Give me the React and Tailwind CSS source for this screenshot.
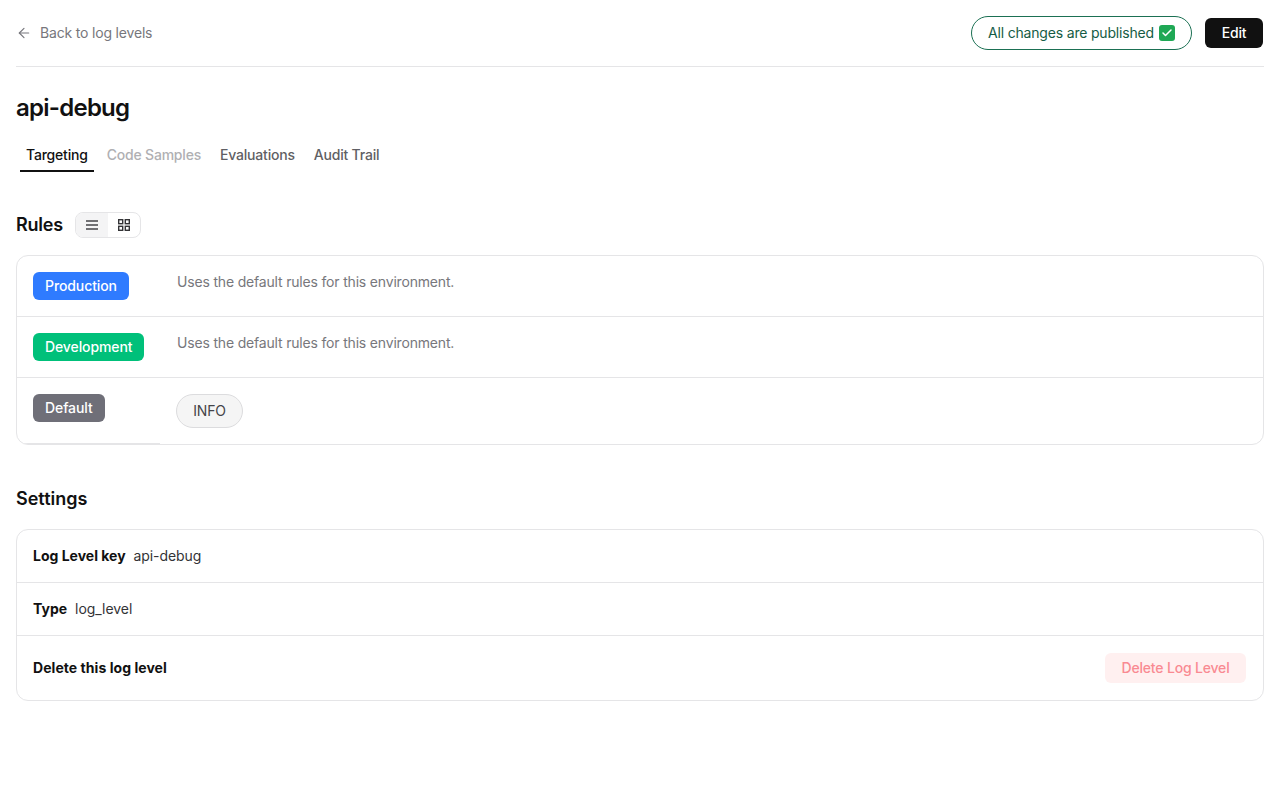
import React from "react";
import { ArrowLeft, Check } from "lucide-react";

const tabs = [
  { name: "Targeting", className: "text-[#111111] border-[#111111]" },
  { name: "Code Samples", className: "text-[#b0b0b3] border-transparent" },
  { name: "Evaluations", className: "text-[#5f5f64] border-transparent" },
  { name: "Audit Trail", className: "text-[#5f5f64] border-transparent" },
];

const App = () => {
  return (
    <div
      className="min-h-[800px] bg-white px-4 text-sm tracking-[-0.18px] text-[#111111]"
      style={{ fontFamily: "Inter, sans-serif" }}
    >
      {/* Header */}
      <div className="flex h-[67px] items-center justify-between border-b border-[#e5e5e7]">
        <div className="flex items-center gap-2 text-[#77777c]">
          <ArrowLeft size={16} strokeWidth={1.75} />
          <span>Back to log levels</span>
        </div>
        <div className="flex items-center gap-[13px] pr-px">
          <div className="flex h-[34px] w-[221px] items-center gap-[5px] rounded-full border border-[#1b7053] pl-4 text-[#155c45]">
            <span>All changes are published</span>
            <span className="flex h-4 w-4 items-center justify-center rounded-[3px] bg-[#1fa855] text-white">
              <Check size={12} strokeWidth={3} />
            </span>
          </div>
          <button className="h-[30px] w-[58px] rounded-md bg-[#111111] font-medium text-white">
            Edit
          </button>
        </div>
      </div>

      <h1 className="mt-[26px] text-2xl leading-[30px] font-semibold tracking-[-0.75px]">api-debug</h1>

      {/* Tabs */}
      <div className="mt-[17px] flex gap-[7px] pl-1">
        {tabs.map((tab) => (
          <div
            key={tab.name}
            className={`h-[32px] border-b-2 px-[6px] pt-[5px] font-medium tracking-[-0.2px] ${tab.className}`}
          >
            {tab.name}
          </div>
        ))}
      </div>

      {/* Rules */}
      <div className="mt-10 flex items-center gap-3">
        <h2 className="text-lg leading-[26px] font-semibold tracking-[-0.2px]">Rules</h2>
        <div className="flex h-[26px] w-[66px] overflow-hidden rounded-lg border border-[#e5e5e7]">
          <div className="flex w-8 items-center justify-center bg-[#f4f4f5] text-[#444448]">
            <svg width="14" height="12" viewBox="0 0 14 12" fill="none" stroke="currentColor" strokeWidth="1.5">
              <path d="M1 2h12M1 6h12M1 10h12" />
            </svg>
          </div>
          <div className="flex flex-1 items-center justify-center text-[#333336]">
            <svg width="14" height="14" viewBox="0 0 14 14" fill="none" stroke="currentColor" strokeWidth="1.4">
              <rect x="1.7" y="1.7" width="4" height="4" />
              <rect x="8.3" y="1.7" width="4" height="4" />
              <rect x="1.7" y="8.3" width="4" height="4" />
              <rect x="8.3" y="8.3" width="4" height="4" />
            </svg>
          </div>
        </div>
      </div>

      <div className="mt-[17px] overflow-hidden rounded-xl border border-[#e5e5e7]">
        <div className="flex h-[61px] border-b border-[#e5e5e7]">
          <div className="w-[160px] pt-4 pl-4">
            <span className="inline-flex h-7 items-center rounded-md bg-[#2f7bff] px-3 font-medium tracking-[-0.1px] text-white">
              Production
            </span>
          </div>
          <p className="pt-4 leading-5 text-[#77777c]">Uses the default rules for this environment.</p>
        </div>
        <div className="flex h-[61px] border-b border-[#e5e5e7]">
          <div className="w-[160px] pt-4 pl-4">
            <span className="inline-flex h-7 items-center rounded-md bg-[#00c07a] px-3 font-medium tracking-[-0.1px] text-white">
              Development
            </span>
          </div>
          <p className="pt-4 leading-5 text-[#77777c]">Uses the default rules for this environment.</p>
        </div>
        <div className="flex h-[66px]">
          <div className="w-[143px] border-b border-[#e5e5e7] pt-4 pl-4">
            <span className="inline-flex h-7 items-center rounded-md bg-[#6f6f78] px-3 font-medium tracking-[-0.1px] text-white">
              Default
            </span>
          </div>
          <div className="pt-4 pl-4">
            <span className="inline-flex h-[34px] w-[67px] items-center justify-center rounded-full border border-[#dcdcde] bg-[#f5f5f5] text-[#444448]">
              INFO
            </span>
          </div>
        </div>
      </div>

      {/* Settings */}
      <h2 className="mt-[41px] text-lg leading-[26px] font-semibold tracking-normal">Settings</h2>

      <div className="mt-[17px] rounded-xl border border-[#e5e5e7]">
        <div className="flex h-[53px] items-center gap-2 border-b border-[#e5e5e7] px-4">
          <span className="font-bold tracking-normal">Log Level key</span>
          <span className="tracking-[-0.1px] text-[#333336]">api-debug</span>
        </div>
        <div className="flex h-[53px] items-center gap-2 border-b border-[#e5e5e7] px-4">
          <span className="font-bold tracking-normal">Type</span>
          <span className="tracking-[-0.05px] text-[#333336]">log_level</span>
        </div>
        <div className="flex h-[64px] items-center justify-between pr-[17px] pl-4">
          <span className="font-bold tracking-[0.05px]">Delete this log level</span>
          <button className="h-[30px] w-[141px] rounded-md bg-[#fff0f0] font-medium text-[#f98a92]">
            Delete Log Level
          </button>
        </div>
      </div>
    </div>
  );
};

export default App;
